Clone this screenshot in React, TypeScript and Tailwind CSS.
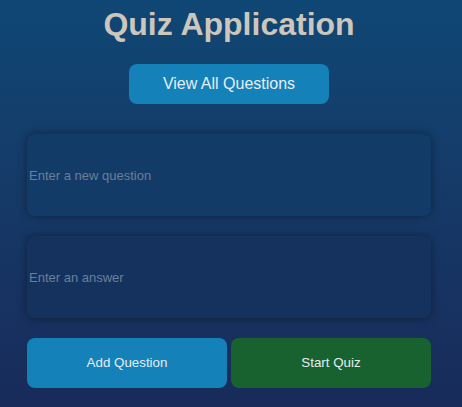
import React from "react";

export default function App() {
  const font = { fontFamily: '"Liberation Sans", Arial, sans-serif' };
  return (
    <div
      className="min-h-screen w-full bg-gradient-to-b from-[#0f4774] to-[#182b5a] flex flex-col items-center pt-[6px] pr-[4px]"
      style={font}
    >
      <h1 className="text-[32px] leading-[37px] font-bold text-[#cdc6bd]">Quiz Application</h1>
      <button className="mt-[21px] h-10 w-[200px] rounded-lg bg-[#1581b9] text-[16px] text-[#e6edf2]">
        View All Questions
      </button>
      <div className="mt-[30px] flex w-[404px] flex-col gap-5">
        <input
          placeholder="Enter a new question"
          className="h-[82px] w-full rounded-lg bg-[#133b67] px-[2px] text-[13px] text-[#dde] placeholder:text-[#6b7f99] shadow-[0_0_10px_rgba(0,0,0,0.4)] outline-none"
        />
        <input
          placeholder="Enter an answer"
          className="h-[82px] w-full rounded-lg bg-[#15325e] px-[2px] text-[13px] text-[#dde] placeholder:text-[#6b7f99] shadow-[0_0_10px_rgba(0,0,0,0.4)] outline-none"
        />
        <div className="flex gap-1">
          <button className="h-[50px] w-[200px] rounded-lg bg-[#1581b9] text-[13.33px] text-[#e6edf2]">
            Add Question
          </button>
          <button className="h-[50px] w-[200px] rounded-lg bg-[#17622f] text-[13.33px] text-[#e6edf2]">
            Start Quiz
          </button>
        </div>
      </div>
    </div>
  );
}
